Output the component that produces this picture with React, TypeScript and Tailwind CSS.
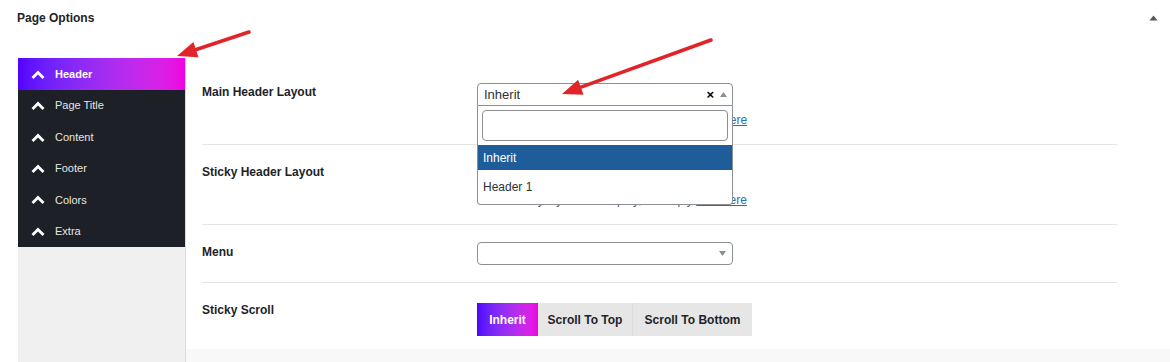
import React from 'react';

const font = { fontFamily: '"Liberation Sans", Arial, sans-serif' };

const tabs = ['Header', 'Page Title', 'Content', 'Footer', 'Colors', 'Extra'];

const Chevron = () => (
    <svg width="14" height="9" viewBox="0 0 14 9" className="shrink-0">
        <path d="M1.5 8 L7 2.5 L12.5 8" fill="none" stroke="#fff" strokeWidth="2.8" />
    </svg>
);

// red annotation arrow, head computed from the direction
const Arrow = ({ x1, y1, x2, y2 }: { x1: number; y1: number; x2: number; y2: number }) => {
    const dx = x2 - x1;
    const dy = y2 - y1;
    const len = Math.hypot(dx, dy);
    const ux = dx / len;
    const uy = dy / len;
    const hl = 20;
    const hw = 8;
    const bx = x2 - ux * hl;
    const by = y2 - uy * hl;
    const pts = `${x2},${y2} ${bx - uy * hw},${by + ux * hw} ${bx + uy * hw},${by - ux * hw}`;
    return (
        <g>
            <line x1={x1} y1={y1} x2={bx + ux * 2} y2={by + uy * 2} stroke="#e2232a" strokeWidth="3.6" strokeLinecap="round" />
            <polygon points={pts} fill="#e2232a" />
        </g>
    );
};

const Label = ({ children }: { children: React.ReactNode }) => (
    <div className="w-[275px] shrink-0 pt-[20px] text-[12px] leading-[14px] font-bold text-[#1d2327]">{children}</div>
);

const Desc = ({ text }: { text: string }) => (
    <p className="mt-[6px] whitespace-nowrap text-[12px] leading-[16px] text-[#50575e]">
        {text} <a className="text-[#2271b1] underline">click here</a>
    </p>
);

const App = () => {
    return (
        <div className="relative h-[362px] w-[1170px] overflow-hidden bg-white" style={font}>
            <div className="flex h-[36px] items-center justify-between pl-[17px] pr-[12px]">
                <h2 className="text-[12px] font-bold text-[#1d2327]">Page Options</h2>
                <svg width="9" height="6" viewBox="0 0 9 6">
                    <path d="M0.5 5.5 L4.5 0.5 L8.5 5.5 Z" fill="#50575e" />
                </svg>
            </div>

            <div className="flex h-[326px]">
                {/* tabs */}
                <div className="ml-[18px] mt-[22px] flex w-[168px] flex-col border-r border-[#dcdcde] bg-[#f0f0f0]">
                    <div className="flex h-[32px] items-center gap-[10px] bg-gradient-to-r from-[#5400ff] to-[#f000e2] pl-[13px] text-[11px] font-bold text-white">
                        <Chevron />
                        {tabs[0]}
                    </div>
                    <div className="bg-[#1d2026]">
                        {tabs.slice(1).map((t) => (
                            <div key={t} className="flex h-[31.4px] items-center gap-[10px] pl-[13px] text-[11px] text-[#e6e6e6]">
                                <Chevron />
                                {t}
                            </div>
                        ))}
                    </div>
                </div>

                {/* fields */}
                <div className="flex flex-1 flex-col pt-[29px]">
                    <div className="ml-[16px] mr-[53px]">
                        <div className="flex border-b border-[#e5e5e5]">
                            <Label>Main Header Layout</Label>
                            <div className="pt-[18px] pb-[16px]">
                                <div className="relative w-[256px]">
                                    <div className="flex h-[23px] items-center justify-between rounded-t-[4px] border border-[#8c8f94] pl-[6px] pr-[5px] text-[13px] text-[#2c3338]">
                                        Inherit
                                        <div className="flex items-center gap-[6px]">
                                            <span className="text-[13px] leading-none font-bold text-black">×</span>
                                            <svg width="7" height="5" viewBox="0 0 7 5">
                                                <path d="M0 5 L3.5 0 L7 5 Z" fill="#8c8f94" />
                                            </svg>
                                        </div>
                                    </div>
                                    <div className="absolute left-0 top-full z-10 w-full rounded-b-[4px] border border-t-0 border-[#8c8f94] bg-white">
                                        <div className="mx-[4px] mt-[4px] mb-[4px] h-[31px] rounded-[4px] border border-[#8c8f94]" />
                                        <div className="flex h-[25px] items-center bg-[#1e5d99] pl-[5px] text-[12px] text-white">Inherit</div>
                                        <div className="flex h-[34px] items-center pl-[5px] text-[12px] text-[#2c3338]">Header 1</div>
                                    </div>
                                </div>
                                <Desc text="Select the header layout for this page, or" />
                            </div>
                        </div>

                        <div className="flex border-b border-[#e5e5e5]">
                            <Label>Sticky Header Layout</Label>
                            <div className="pt-[18px] pb-[16px]">
                                <div className="flex h-[23px] w-[256px] items-center rounded-[4px] border border-[#8c8f94]" />
                                <Desc text="Select sticky layouts to display, or simply" />
                            </div>
                        </div>

                        <div className="flex border-b border-[#e5e5e5]">
                            <Label>Menu</Label>
                            <div className="pt-[17px] pb-[17px]">
                                <div className="flex h-[23px] w-[256px] items-center justify-end rounded-[4px] border border-[#8c8f94] pr-[6px]">
                                    <svg width="7" height="5" viewBox="0 0 7 5">
                                        <path d="M0 0 L3.5 5 L7 0 Z" fill="#8c8f94" />
                                    </svg>
                                </div>
                            </div>
                        </div>

                        <div className="flex">
                            <Label>Sticky Scroll</Label>
                            <div className="flex pt-[20px] pb-[13px]">
                                <button className="h-[33px] w-[61px] bg-gradient-to-r from-[#4f00ff] to-[#f000e2] text-[12px] font-bold text-white">Inherit</button>
                                <button className="h-[33px] w-[95px] border-r border-[#dcdcdc] bg-[#e7e6e7] text-[12px] font-bold text-[#1d2327]">Scroll To Top</button>
                                <button className="h-[33px] w-[119px] bg-[#e7e6e7] text-[12px] font-bold text-[#1d2327]">Scroll To Bottom</button>
                            </div>
                        </div>
                    </div>
                    <div className="flex-1 bg-[#f8f8f8]" />
                </div>
            </div>

            <svg className="pointer-events-none absolute inset-0" width="1170" height="362">
                <Arrow x1={249} y1={32} x2={177} y2={56} />
                <Arrow x1={711} y1={40} x2={562} y2={94} />
            </svg>
        </div>
    );
};

export default App;
